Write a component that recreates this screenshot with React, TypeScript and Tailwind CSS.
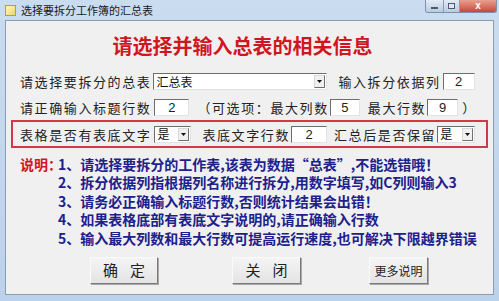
import React from 'react';

const cjk = "font-['Noto_Sans_CJK_SC','Noto_Sans',sans-serif]";

function Field({ value, w }: { value: string; w: string }) {
  return (
    <div
      className={`${w} h-[17px] bg-white border border-t-[#6d6d6d] border-l-[#6d6d6d] border-b-[#e3e3e3] border-r-[#e3e3e3] flex items-center justify-center text-[13px] text-[#222] font-['Liberation_Sans',sans-serif] leading-none`}
    >
      {value}
    </div>
  );
}

function Combo({ value, w }: { value: string; w: string }) {
  return (
    <div
      className={`${w} h-[17px] bg-white border border-t-[#6d6d6d] border-l-[#6d6d6d] border-b-[#e3e3e3] border-r-[#e3e3e3] flex items-center`}
    >
      <span className={`flex-1 pl-[2px] text-[12px] text-[#111] leading-none ${cjk}`}>{value}</span>
      <span className="w-[11px] h-[13px] mr-[1px] bg-[#f0f0f0] border border-[#d8d8d8] border-r-[#707070] border-b-[#707070] flex items-center justify-center">
        <svg width="5" height="3" viewBox="0 0 5 3">
          <path d="M0 0h5L2.5 3z" fill="#111" />
        </svg>
      </span>
    </div>
  );
}

function Label({ children, className = '' }: { children: React.ReactNode; className?: string }) {
  return (
    <span className={`text-[13px] tracking-[1.6px] text-[#222] leading-none whitespace-nowrap ${cjk} ${className}`}>
      {children}
    </span>
  );
}

function Btn({ children, w, small }: { children: React.ReactNode; w: string; small?: boolean }) {
  return (
    <button
      className={`${w} h-[27px] bg-gradient-to-b from-[#f4f4f4] to-[#e4e4e4] border border-t-[#fafafa] border-l-[#fafafa] border-r-[#7a7a7a] border-b-[#7a7a7a] shadow-[1px_1px_0_#a9a9a9] flex items-center justify-center text-[#222] ${cjk} ${small ? 'text-[12px]' : 'text-[15px] tracking-[12px] pl-[12px]'}`}
    >
      {children}
    </button>
  );
}

const notes = [
  '1、请选择要拆分的工作表,该表为数据“总表”,不能选错哦！',
  '2、拆分依据列指根据列名称进行拆分,用数字填写,如C列则输入3',
  '3、请务必正确输入标题行数,否则统计结果会出错！',
  '4、如果表格底部有表底文字说明的,请正确输入行数',
  '5、输入最大列数和最大行数可提高运行速度,也可解决下限越界错误',
];

export default function App() {
  return (
    <div className="w-[499px] h-[301px] bg-gradient-to-b from-[#c9dcf0] to-[#bcd2ea] flex flex-col overflow-hidden">
      {/* title bar */}
      <div className="h-[20px] flex items-center relative">
        <div className="ml-[5px] w-[11px] h-[11px] bg-gradient-to-br from-[#fff7c0] to-[#e8d860] border border-[#b0a040]"></div>
        <span className={`ml-[5px] text-[11px] text-[#1a1a1a] leading-none ${cjk}`}>选择要拆分工作簿的汇总表</span>
        <div className="absolute right-[2px] top-0 h-[13px] flex rounded-b-[3px] overflow-hidden border border-t-0 border-[#7e90a8]">
          <div className="w-[18px] bg-gradient-to-b from-[#e3ecf6] to-[#b9cbe0] flex items-center justify-center border-r border-[#8a9bb2]">
            <div className="w-[7px] h-[2px] bg-white border border-[#4d5b6e] mt-[4px]"></div>
          </div>
          <div className="w-[16px] bg-gradient-to-b from-[#e3ecf6] to-[#b9cbe0] flex items-center justify-center border-r border-[#8a9bb2]">
            <div className="w-[7px] h-[6px] border border-[#4d5b6e] bg-[#dfe8f2]"></div>
          </div>
          <div className="w-[36px] bg-gradient-to-b from-[#e8a090] to-[#c5463a] flex items-center justify-center">
            <span className="text-white text-[10px] font-bold leading-none font-['Liberation_Sans',sans-serif]">x</span>
          </div>
        </div>
      </div>

      {/* client area */}
      <div className="mx-[5px] mb-[6px] flex-1 bg-[#f0f0f0] border border-[#8b9db4] flex flex-col">
        <h1 className={`mt-[13px] h-[24px] pr-[14px] text-center text-[20px] font-bold text-[#d0161f] leading-[24px] ${cjk}`}>
          请选择并输入总表的相关信息
        </h1>

        <div className="mt-[15px] h-[17px] flex items-center pl-[14px]">
          <Label>请选择要拆分的总表</Label>
          <div className="ml-[2px]">
            <Combo value="汇总表" w="w-[174px]" />
          </div>
          <Label className="ml-[11px]">输入拆分依据列</Label>
          <div className="ml-[2px]">
            <Field value="2" w="w-[32px]" />
          </div>
        </div>

        <div className="mt-[9px] h-[17px] flex items-center pl-[14px]">
          <Label>请正确输入标题行数</Label>
          <div className="ml-[3px]">
            <Field value="2" w="w-[35px]" />
          </div>
          <Label className="ml-[8px]">（可选项：最大列数</Label>
          <div className="ml-[1px]">
            <Field value="5" w="w-[30px]" />
          </div>
          <Label className="ml-[8px]">最大行数</Label>
          <div className="ml-[1px]">
            <Field value="9" w="w-[31px]" />
          </div>
          <Label className="ml-[4px]">）</Label>
        </div>

        <div className="mt-[4px] mx-[5px] h-[28px] border-2 border-[#d03a48] flex items-center pl-[7px]">
          <Label>表格是否有表底文字</Label>
          <div className="ml-[3px]">
            <Combo value="是" w="w-[37px]" />
          </div>
          <Label className="ml-[11px]">表底文字行数</Label>
          <div className="ml-[1px]">
            <Field value="2" w="w-[36px]" />
          </div>
          <Label className="ml-[7px]">汇总后是否保留</Label>
          <div className="ml-[1px]">
            <Combo value="是" w="w-[38px]" />
          </div>
        </div>

        <div className="mt-[7px] flex pl-[14px]">
          <span className={`w-[38px] shrink-0 whitespace-nowrap text-[14px] font-bold text-[#d0161f] leading-[18.4px] ${cjk}`}>说明：</span>
          <div className="flex flex-col">
            {notes.map((n) => (
              <span key={n} className={`text-[14px] font-bold text-[#20208c] leading-[18.4px] whitespace-nowrap ${cjk}`}>
                {n}
              </span>
            ))}
          </div>
        </div>

        <div className="mt-[10px] flex items-center pl-[84px]">
          <Btn w="w-[68px]">确定</Btn>
          <div className="ml-[74px]">
            <Btn w="w-[69px]">关闭</Btn>
          </div>
          <div className="ml-[68px]">
            <Btn w="w-[59px]" small>更多说明</Btn>
          </div>
        </div>
      </div>
    </div>
  );
}
